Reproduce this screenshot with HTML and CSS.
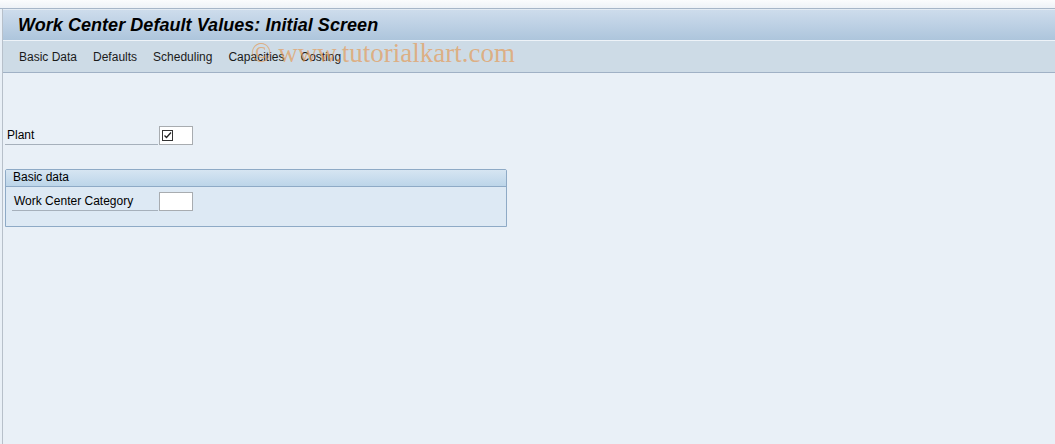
FILE: index.html
```html
<!DOCTYPE html>
<html lang="en">
<head>
    <meta charset="UTF-8">
    <title>Work Center Default Values: Initial Screen</title>
    <link rel="stylesheet" href="styles.css">
</head>
<body>
    <div class="top-strip"></div>
    <div class="frame">
        <div class="title-bar">
            <h1>Work Center Default Values: Initial Screen</h1>
        </div>
        <div class="menu-bar">
            <span class="menu-item">Basic Data</span>
            <span class="menu-item">Defaults</span>
            <span class="menu-item">Scheduling</span>
            <span class="menu-item">Capacities</span>
            <span class="menu-item">Costing</span>
            <span class="watermark">&copy; www.tutorialkart.com</span>
        </div>
        <div class="content">
            <div class="field-row plant-row">
                <label class="field-label">Plant</label>
                <div class="field-input">
                    <svg class="req" width="11" height="11" viewBox="0 0 11 11">
                        <rect x="0.5" y="0.5" width="10" height="10" fill="none" stroke="#333" stroke-width="1"/>
                        <path d="M2.5 5.5 L4.5 7.5 L9 2.5" fill="none" stroke="#222" stroke-width="1.3"/>
                    </svg>
                </div>
            </div>

            <div class="group-box">
                <div class="group-title">Basic data</div>
                <div class="group-body">
                    <div class="field-row">
                        <label class="field-label inner">Work Center Category</label>
                        <div class="field-input"></div>
                    </div>
                </div>
            </div>
        </div>
    </div>
</body>
</html>
```

FILE: styles.css
```css
html, body {
    margin: 0;
    padding: 0;
    height: 100%;
}
body {
    font-family: "Liberation Sans", Arial, sans-serif;
    font-size: 12px;
    color: #000;
    background: #e9f0f7;
    display: flex;
    flex-direction: column;
    overflow: hidden;
}
.top-strip {
    height: 8px;
    background: linear-gradient(#fbfcfd, #eef2f7);
    border-bottom: 1px solid #a7b6c8;
}
.frame {
    flex: 1;
    margin-left: 2px;
    border-left: 1px solid #b7c0ca;
    display: flex;
    flex-direction: column;
}
.title-bar {
    height: 30px;
    border-top: 1px solid #e4ecf4;
    background: linear-gradient(#cddcec, #adc5dc);
    display: flex;
    align-items: center;
    padding-left: 15px;
}
.title-bar h1 {
    margin: 0;
    font-size: 18px;
    font-style: italic;
    font-weight: bold;
    color: #000;
    letter-spacing: 0.05px;
}
.menu-bar {
    position: relative;
    height: 31px;
    border-top: 1px solid #eef3f8;
    border-bottom: 1px solid #a0b1c5;
    background: #cddbe6;
    display: flex;
    align-items: center;
    padding-left: 16px;
    gap: 16px;
}
.menu-item {
    color: #1a1a1a;
    white-space: nowrap;
}
.watermark {
    position: absolute;
    left: 248px;
    top: -3px;
    font-family: "Liberation Serif", "Times New Roman", serif;
    font-size: 27px;
    color: rgba(230, 150, 75, 0.65);
    white-space: nowrap;
    pointer-events: none;
}
.content {
    flex: 1;
    padding-top: 52px;
}
.field-row {
    display: flex;
    align-items: flex-end;
    height: 20px;
}
.plant-row {
    margin-left: 2px;
}
.field-label {
    width: 151px;
    border-bottom: 1px solid #a6b0bb;
    padding-left: 2px;
    padding-bottom: 2px;
    line-height: 14px;
    margin-right: 1px;
}
.field-label.inner {
    width: 144px;
}
.field-input {
    width: 30px;
    height: 17px;
    background: #fff;
    border: 1px solid #a8acb0;
    display: flex;
    align-items: center;
    padding-left: 2px;
}
.req {
    display: block;
}
.group-box {
    margin-top: 24px;
    margin-left: 2px;
    width: 500px;
    border: 1px solid #8eaac6;
    border-radius: 2px 2px 0 0;
    background: #dde9f4;
}
.group-title {
    height: 16px;
    line-height: 15px;
    padding-left: 7px;
    background: linear-gradient(#d6e5f2, #bcd5e9);
    border-bottom: 1px solid #8eaac6;
}
.group-body {
    padding: 4px 0 15px 6px;
}
```
